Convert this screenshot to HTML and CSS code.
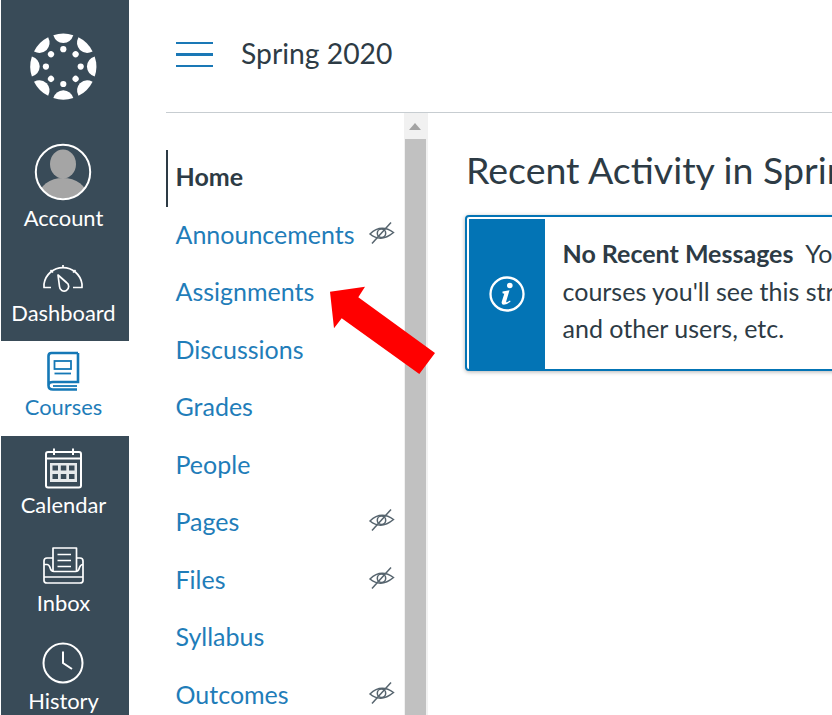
FILE: index.html
```html
<!DOCTYPE html>
<html lang="en">
<head>
<meta charset="utf-8">
<title>Spring 2020</title>
<link rel="stylesheet" href="styles.css">
</head>
<body>
<div class="page">
  <aside class="rail">
    <div class="logo">
      <svg class="logo-svg" viewBox="0 0 128 143">
        <defs>
          <path id="blob" d="M-10 -31.4Q0 -34.8 10 -31.4Q7.5 -24 0 -23.6Q-7.5 -24 -10 -31.4Z"/>
          <circle id="dot" cx="0" cy="-17.4" r="3.1"/>
        </defs>
        <g class="logo-g" transform="translate(62.3 66.6)">
          <use href="#blob"/><use href="#blob" transform="rotate(45)"/><use href="#blob" transform="rotate(90)"/><use href="#blob" transform="rotate(135)"/><use href="#blob" transform="rotate(180)"/><use href="#blob" transform="rotate(225)"/><use href="#blob" transform="rotate(270)"/><use href="#blob" transform="rotate(315)"/>
          <use href="#dot"/><use href="#dot" transform="rotate(45)"/><use href="#dot" transform="rotate(90)"/><use href="#dot" transform="rotate(135)"/><use href="#dot" transform="rotate(180)"/><use href="#dot" transform="rotate(225)"/><use href="#dot" transform="rotate(270)"/><use href="#dot" transform="rotate(315)"/>
        </g>
      </svg>
    </div>
    <a class="item item-account">
      <svg class="ico-tall" viewBox="0 0 128 60">
        <defs><clipPath id="av"><circle cx="62" cy="29" r="26.5"/></clipPath></defs>
        <g clip-path="url(#av)" class="avatar">
          <ellipse cx="62" cy="21" rx="13" ry="14.5"/>
          <ellipse cx="62" cy="53" rx="24" ry="18"/>
        </g>
        <circle class="ln" cx="62" cy="29" r="27.2"/>
      </svg>
      <span class="label">Account</span>
    </a>
    <a class="item item-dash">
      <svg class="ico" viewBox="0 0 128 44">
        <path class="ln thin" d="M50 33.5H43V30A19.2 19.2 0 0 1 81 30V33.5H72"/>
        <path class="ln thin" d="M62 11V14M49.5 16L52 18.5M74.5 16L72 18.5"/>
        <path class="ln thin" d="M57 21L65.5 28.5A4.6 4.6 0 1 1 58.5 32.5Z"/>
      </svg>
      <span class="label">Dashboard</span>
    </a>
    <a class="item item-active">
      <svg class="ico" viewBox="0 0 128 44">
        <path class="bk" d="M77 5H50.5Q47.5 5 47.5 8V37.5Q47.5 41.5 52 41.5H76M77 5V34H52Q47.5 34 47.5 37.5"/>
        <path class="bk thinb" d="M52 38H76"/>
        <rect class="bk thinb" x="53.5" y="13" width="16.5" height="8"/>
        <path class="bk thinb" d="M53.5 25.5H70"/>
      </svg>
      <span class="label">Courses</span>
    </a>
    <a class="item">
      <svg class="ico" viewBox="0 0 128 44">
        <rect class="ln" x="45" y="6" width="35" height="35.5" rx="2"/>
        <path class="ln" d="M53 2.5V9M72 2.5V9M45 12.5H80"/>
        <rect class="fill" x="49" y="17" width="27" height="19"/>
        <path class="hole" d="M51.500 19.500h5.500v5h-5.500zM59.800 19.500h5.500v5h-5.500zM68 19.500h5.500v5h-5.500zM51.500 28h5.500v5h-5.500zM59.800 28h5.500v5h-5.500zM68 28h5.500v5h-5.500z"/>
      </svg>
      <span class="label">Calendar</span>
    </a>
    <a class="item">
      <svg class="ico" viewBox="0 0 128 44">
        <path class="ln thin" d="M52 27V4H75.5V27"/>
        <path class="ln thin" d="M56.5 10.5H70M56.5 16.5H70M56.5 22.5H70"/>
        <path class="ln thin" d="M52 14H46Q43 14 43 17V36.5Q43 39 46 39H79Q82 39 82 36.5V17Q82 14 79 14H75.5"/>
        <path class="ln thin" d="M43 20.5H46Q48 20.5 49 23.5Q50 27.5 53 27.5H74.5Q77.5 27.5 78.500 23.5Q79.500 20.500 82 20.500M43 33H82"/>
      </svg>
      <span class="label">Inbox</span>
    </a>
    <a class="item">
      <svg class="ico" viewBox="0 0 128 44">
        <circle class="ln" cx="62" cy="21" r="19.500"/>
        <path class="ln" d="M62 9.500V21L71 27"/>
      </svg>
      <span class="label">History</span>
    </a>
  </aside>

  <div class="main">
    <header class="top">
      <span class="burger"><i></i><i></i><i></i></span>
      <span class="crumb">Spring 2020</span>
    </header>
    <div class="body">
      <nav class="course-nav">
        <a class="row row-home">Home</a>
        <a class="row">Announcements<svg class="eye" viewBox="0 0 28 26"><use href="#eye-g"/></svg></a>
        <a class="row">Assignments</a>
        <a class="row">Discussions</a>
        <a class="row">Grades</a>
        <a class="row">People</a>
        <a class="row">Pages<svg class="eye" viewBox="0 0 28 26"><use href="#eye-g"/></svg></a>
        <a class="row">Files<svg class="eye" viewBox="0 0 28 26"><use href="#eye-g"/></svg></a>
        <a class="row">Syllabus</a>
        <a class="row">Outcomes<svg class="eye" viewBox="0 0 28 26"><use href="#eye-g"/></svg></a>
      </nav>
      <div class="scrollbar">
        <span class="scroll-up"></span>
        <span class="thumb"></span>
      </div>
      <section class="content">
        <h1 class="heading">Recent Activity in Spring 2020</h1>
        <div class="alert">
          <div class="alert-icon">
            <svg class="info" viewBox="0 0 38 38">
              <circle cx="19" cy="19" r="16.500"/>
              <circle class="info-dot" cx="21.800" cy="10.500" r="2.800"/>
              <path class="info-i" d="M14.500 16.500L21.500 15.200L18.300 26Q17.800 28 19.500 27L22 25.500L22.600 26.500Q19 29.800 15.800 29.800Q13 29.800 13.800 26.500L16.300 18.800L14.500 18.200Z"/>
            </svg>
          </div>
          <p class="alert-text"><strong>No Recent Messages</strong>&nbsp; You don't have any messages to show in your stream yet. Once you begin participating in your<br>courses you'll see this stream fill up with messages from discussions, grades<br>and other users, etc.</p>
        </div>
      </section>
    </div>
  </div>

  <svg class="defs" viewBox="0 0 28 26">
    <defs>
      <g id="eye-g" class="eye-g">
        <path d="M2 13Q13 2.500 25.500 11.500Q13 22 2 13Z"/>
        <circle cx="13.500" cy="12.200" r="4.200"/>
        <path d="M23 1.500L4 22.500"/>
      </g>
    </defs>
  </svg>
  <svg class="arrow" viewBox="0 0 832 715">
    <polygon points="330,291.700 365,286.700 358.300,297.300 435,353 419.300,374 341.700,318.300 334,328.300"/>
  </svg>
</div>
</body>
</html>
```
FILE: styles.css
```css
* { box-sizing: border-box; }
html, body { margin: 0; padding: 0; background: #fff; }
.page {
  position: relative;
  display: flex;
  width: 832px;
  height: 715px;
  overflow: hidden;
  font-family: Lato, "Open Sans", sans-serif;
  color: #2d3b45;
}

/* global rail */
.rail {
  flex: none;
  width: 128px;
  height: 715px;
  margin-left: 1px;
  background: #394b58;
  overflow: hidden;
}
.logo { height: 143px; }
.logo-svg { display: block; width: 128px; height: 143px; }
.logo-g { fill: #fff; }
.item {
  display: block;
  padding: 10px 0 14px;
  color: #fff;
  text-align: center;
}
.item-account { padding: 0 0 14px; }
.item-dash { padding: 7px 0 13px; }
.item-active { padding: 7px 0 14px; background: #fff; color: #1f7db9; }
.ico, .ico-tall { display: block; width: 128px; height: 44px; }
.ico-tall { height: 60px; }
.label {
  display: block;
  height: 30px;
  padding-right: 3px;
  font-size: 21.900px;
  line-height: 30px;
  white-space: nowrap;
}
.ln { fill: none; stroke: #fff; stroke-width: 2; }
.ln.thin { stroke-width: 1.700; stroke-linejoin: round; }
.avatar { fill: #a5a5a5; }
.bk { fill: none; stroke: #1578b6; stroke-width: 2.600; }
.bk.thinb { stroke-width: 1.800; }
.fill { fill: #e6e9eb; }
.hole { fill: #394b58; }

/* main column */
.main { flex: 1; min-width: 0; margin-left: 37px; }
.top {
  display: flex;
  align-items: center;
  height: 113px;
  padding: 0 0 6px 10px;
  border-bottom: 1px solid #c7cdd1;
}
.burger {
  display: flex;
  flex-direction: column;
  gap: 9px;
  width: 37px;
  margin: 3px 28px 0 0;
}
.burger i { display: block; height: 2.500px; background: #1a78b6; }
.crumb { font-size: 28.300px; line-height: 36px; color: #2d3b45; }
.body { display: flex; height: 602px; }

/* course nav */
.course-nav { flex: none; width: 238px; padding-top: 37px; }
.row {
  display: flex;
  align-items: center;
  justify-content: space-between;
  height: 57.500px;
  padding: 0 8px 4.500px 9.500px;
  font-size: 25px;
  color: #1f7db9;
}
.row-home {
  height: 57px;
  padding: 0 8px 6px 7.500px;
  border-left: 2px solid #2d3b45;
  font-weight: 700;
  color: #2d3b45;
}
.eye { width: 28px; height: 26px; margin-top: 0; }
.eye-g { fill: none; stroke: #56646e; stroke-width: 1.500; }
.defs { position: absolute; width: 0; height: 0; }

/* scrollbar */
.scrollbar {
  flex: none;
  width: 24px;
  padding: 26px 2px 0 1px;
  background: #f1f1f1;
}
.scroll-up {
  position: absolute;
  top: 123px;
  left: 409px;
  border-left: 6px solid transparent;
  border-right: 6px solid transparent;
  border-bottom: 7px solid #a3a3a3;
}
.thumb { display: block; height: 100%; background: #c1c1c1; }

/* content */
.content { flex: none; width: 600px; padding: 35px 0 0 38px; }
.heading {
  margin: 0;
  font-size: 37.500px;
  font-weight: 400;
  line-height: 44px;
  white-space: nowrap;
  color: #2d3b45;
}
.alert {
  display: flex;
  width: 560px;
  height: 156px;
  margin: 23px 0 0 -1px;
  padding: 2px 0 0 1.500px;
  border: 2.500px solid #0374b5;
  border-radius: 4px;
  background: #fff;
  box-shadow: 0 1px 4px rgba(0, 0, 0, 0.3);
}
.alert-icon {
  display: flex;
  flex: none;
  align-items: center;
  justify-content: center;
  width: 76px;
  padding-bottom: 1px;
  background: #0374b5;
}
.info { width: 38px; height: 38px; fill: none; stroke: #fff; stroke-width: 2.300; }
.info-dot, .info-i { fill: #fff; stroke: none; }
.alert-text {
  margin: 0;
  padding: 16px 0 0 18px;
  font-size: 25px;
  line-height: 37.500px;
  white-space: nowrap;
  color: #2d3b45;
}
.alert-text strong { font-weight: 700; }

.arrow {
  position: absolute;
  top: 0;
  left: 0;
  width: 832px;
  height: 715px;
  fill: #ff0000;
  pointer-events: none;
}
```
